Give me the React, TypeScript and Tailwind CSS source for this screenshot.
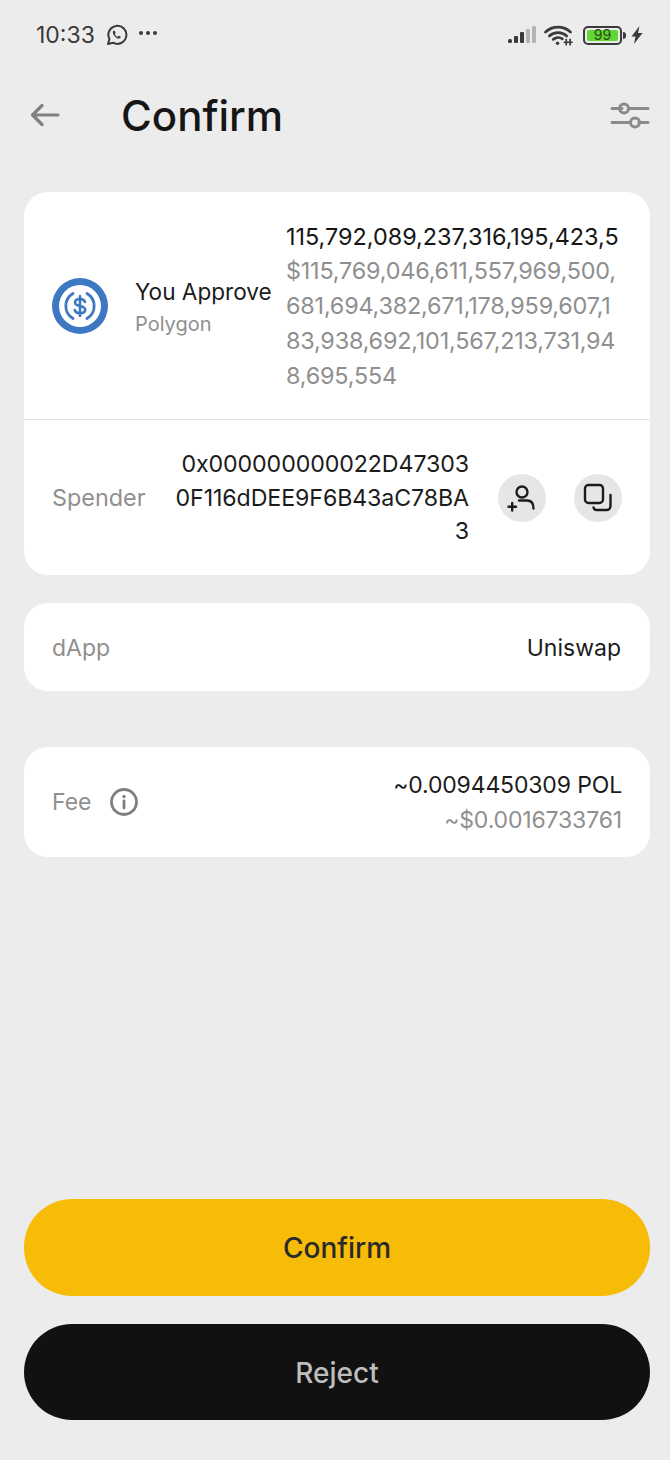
function WhatsApp() {
  return (
    <svg width="22" height="22" viewBox="0 0 22 22" fill="none" stroke="#3a3a3a" strokeWidth="2">
      <path d="M2 20l1.400-5A9 9 0 1 1 7 18.700L2 20z" strokeLinejoin="round" />
      <path d="M7.500 6.800c-1 1-.9 2.600.6 4.700 1.500 2 3.400 3.300 5 3.100 1.200-.2 1.700-1 1.600-1.800l-2-1-1 1c-1.300-.5-2.300-1.500-2.900-2.900l.9-1-1-2.200z" fill="#3a3a3a" stroke="none" />
    </svg>
  );
}

function Signal() {
  return (
    <svg width="28" height="18" viewBox="0 0 28 18">
      <rect x="0" y="13" width="4" height="4" rx="1.500" fill="#3a3a3a" />
      <rect x="6" y="10" width="4" height="7" rx="1" fill="#3a3a3a" />
      <rect x="12" y="6" width="4" height="11" rx="1" fill="#3a3a3a" />
      <rect x="18" y="3" width="4" height="14" rx="1" fill="#b4b4b4" />
      <rect x="24" y="0" width="4" height="17" rx="1" fill="#b4b4b4" />
    </svg>
  );
}

function Wifi() {
  return (
    <svg width="29" height="22" viewBox="0 0 30 22" fill="none" stroke="#3a3a3a" strokeWidth="2.800" strokeLinecap="round">
      <path d="M1.500 8C8.500 1 20.500 1 27.500 8" />
      <path d="M5.500 12c5-4.500 13-4.500 18 0" />
      <path d="M9.500 15.500c3-2.300 7-2.300 9.500-.5" />
      <circle cx="14" cy="19.500" r="1.800" fill="#3a3a3a" stroke="none" />
      <path d="M23 15.500v5.500M27 15.500v5.500" strokeWidth="1.800" />
      <path d="M21 18.500h8" strokeWidth="1.800" />
    </svg>
  );
}

function Bolt() {
  return (
    <svg width="12" height="18" viewBox="0 0 12 18" fill="#3a3a3a">
      <path d="M8.500 0L0.500 10.500h4L3 18l8.500-11h-4.500z" />
    </svg>
  );
}

function Sliders() {
  return (
    <svg width="40" height="28" viewBox="0 0 40 28" fill="none" stroke="#8a8a8a" strokeWidth="3" strokeLinecap="round">
      <path d="M2 6.500h10M20 6.500h18M2 20.500h18M29 20.500h9" />
      <circle cx="14" cy="6.500" r="4.500" />
      <circle cx="25" cy="20.500" r="4.500" />
    </svg>
  );
}

function Usdc() {
  return (
    <svg className="shrink-0" width="56" height="56" viewBox="0 0 56 56" fill="none">
      <circle cx="28" cy="28" r="28" fill="#3f78c2" />
      <circle cx="28" cy="28" r="21" fill="#ffffff" />
      <path d="M21 15.500a14.500 14.500 0 0 0 0 25M35 15.500a14.500 14.500 0 0 1 0 25" stroke="#3f78c2" strokeWidth="2.800" strokeLinecap="round" />
      <path d="M33 24c-.5-2-2.500-3-5-3-2.800 0-5 1.300-5 3.500 0 4.800 10.200 2.300 10.200 7.300 0 2.200-2.300 3.400-5.200 3.400-2.700 0-4.700-1.100-5.200-3.100M28 18v20" stroke="#3f78c2" strokeWidth="2.600" strokeLinecap="round" />
    </svg>
  );
}

function AddUser() {
  return (
    <svg width="32" height="32" viewBox="0 0 32 32" fill="none" stroke="#1c1c1c" strokeWidth="2.400" strokeLinecap="round">
      <circle cx="16" cy="10" r="5.500" />
      <path d="M13 18.500h8c4 0 6.500 3 6.500 8" />
      <path d="M2.500 24.700h7.500M6.200 21v7.500" />
    </svg>
  );
}

function Copy() {
  return (
    <svg width="32" height="32" viewBox="0 0 32 32" fill="none" stroke="#1c1c1c" strokeWidth="2.400" strokeLinecap="round">
      <rect x="3" y="3" width="18" height="18" rx="3.500" />
      <path d="M28.500 13v11a4 4 0 0 1-4 4H15a3.500 3.500 0 0 1-3.500-2.500" />
    </svg>
  );
}

function Info() {
  return (
    <svg width="30" height="30" viewBox="0 0 30 30" fill="none" stroke="#7f7f7f" strokeWidth="2.800" strokeLinecap="round">
      <circle cx="15" cy="15" r="12.500" />
      <path d="M15 14v7" />
      <circle cx="15" cy="9.500" r="1.700" fill="#7f7f7f" stroke="none" />
    </svg>
  );
}

export default function App() {
  return (
    <div className="w-[670px] h-[1460px] bg-[#ececec] flex flex-col pl-6 pr-5 font-[Inter,'Liberation_Sans',sans-serif]">
      <div className="h-[70px] -ml-6 -mr-5 pl-9 pr-[27px] flex items-center justify-between">
        <div className="flex items-center text-[#3a3a3a]">
          <span className="text-[23px] leading-none">10:33</span>
          <span className="ml-[11px]"><WhatsApp /></span>
          <span className="ml-[11px] flex gap-[3px] mb-1">
            <i className="w-1 h-1 rounded-full bg-[#3a3a3a]" />
            <i className="w-1 h-1 rounded-full bg-[#3a3a3a]" />
            <i className="w-1 h-1 rounded-full bg-[#3a3a3a]" />
          </span>
        </div>
        <div className="flex items-center">
          <Signal />
          <span className="ml-2"><Wifi /></span>
          <div className="ml-[10px] w-[39px] h-[19px] rounded-[5px] border-2 border-[#3a3a3a] p-[2px] flex">
            <div className="flex-1 rounded-[2px] bg-[#62d632] flex items-center justify-center text-[14px] leading-none text-[#2a4a1a]">99</div>
          </div>
          <i className="ml-px w-[3px] h-[7px] rounded-r-sm bg-[#3a3a3a]" />
          <span className="ml-[5px]"><Bolt /></span>
        </div>
      </div>

      <div className="h-[92px] -ml-6 -mr-5 pl-[30px] pr-[20px] flex items-center">
        <svg className="mb-[2px]" width="30" height="24" viewBox="0 0 30 24" fill="none" stroke="#808080" strokeWidth="3.200" strokeLinecap="round" strokeLinejoin="round">
          <path d="M28 12H3M12 2.500L2.500 12l9.500 9.500" />
        </svg>
        <h1 className="ml-[61px] text-[42px] leading-none font-medium text-[#161616]">Confirm</h1>
        <span className="ml-auto"><Sliders /></span>
      </div>

      <div className="mt-[30px] bg-white rounded-[24px]">
        <div className="h-[228px] pl-7 pr-[30px] flex items-center border-b border-[#e4e4e4]">
          <Usdc />
          <div className="ml-[27px] w-[151px] shrink-0 pt-[2px]">
            <div className="text-[22.600px] leading-[34px] text-[#1c1c1c]">You Approve</div>
            <div className="text-[20px] leading-[30px] text-[#8f8f8f]">Polygon</div>
          </div>
          <div className="flex-1 text-[23.400px] leading-[34.800px] whitespace-nowrap pt-[2px]">
            <div className="text-[#161616]">115,792,089,237,316,195,423,5</div>
            <div className="text-[#8f8f8f] tracking-[-0.2px]">
              <div>$115,769,046,611,557,969,500,</div>
              <div>681,694,382,671,178,959,607,1</div>
              <div>83,938,692,101,567,213,731,94</div>
              <div>8,695,554</div>
            </div>
          </div>
        </div>
        <div className="h-[155px] pl-7 pr-7 flex items-center">
          <span className="text-[23.400px] text-[#8f8f8f]">Spender</span>
          <div className="ml-auto w-[296px] pt-[2px] text-[23.200px] tracking-[-0.1px] leading-[33.500px] text-right text-[#1c1c1c] break-all">0x000000000022D473030F116dDEE9F6B43aC78BA3</div>
          <div className="ml-[29px] w-12 h-12 rounded-full bg-[#e6e6e6] flex items-center justify-center"><AddUser /></div>
          <div className="ml-7 w-12 h-12 rounded-full bg-[#e6e6e6] flex items-center justify-center"><Copy /></div>
        </div>
      </div>

      <div className="mt-7 h-[88px] bg-white rounded-[24px] pl-7 pr-[29px] pt-[2px] flex items-center justify-between text-[23px]">
        <span className="text-[#8f8f8f]">dApp</span>
        <span className="text-[#1c1c1c]">Uniswap</span>
      </div>

      <div className="mt-14 h-[110px] bg-white rounded-[24px] px-7 flex items-center justify-between text-[23px]">
        <div className="flex items-center">
          <span className="text-[#8f8f8f]">Fee</span>
          <span className="ml-[17px]"><Info /></span>
        </div>
        <div className="text-right leading-[35px] tracking-[-0.15px] pt-[2px]">
          <div className="text-[#1c1c1c]">~0.0094450309 POL</div>
          <div className="text-[#8f8f8f]">~$0.0016733761</div>
        </div>
      </div>

      <button className="mt-[342px] h-[97px] rounded-[48px] bg-[#f6bc08] text-[28px] font-medium text-[#2a2a2a]">Confirm</button>
      <button className="mt-7 h-[96px] pt-[2px] rounded-[48px] bg-[#111111] text-[28px] font-medium text-[#bdbdbd]">Reject</button>
    </div>
  );
}
